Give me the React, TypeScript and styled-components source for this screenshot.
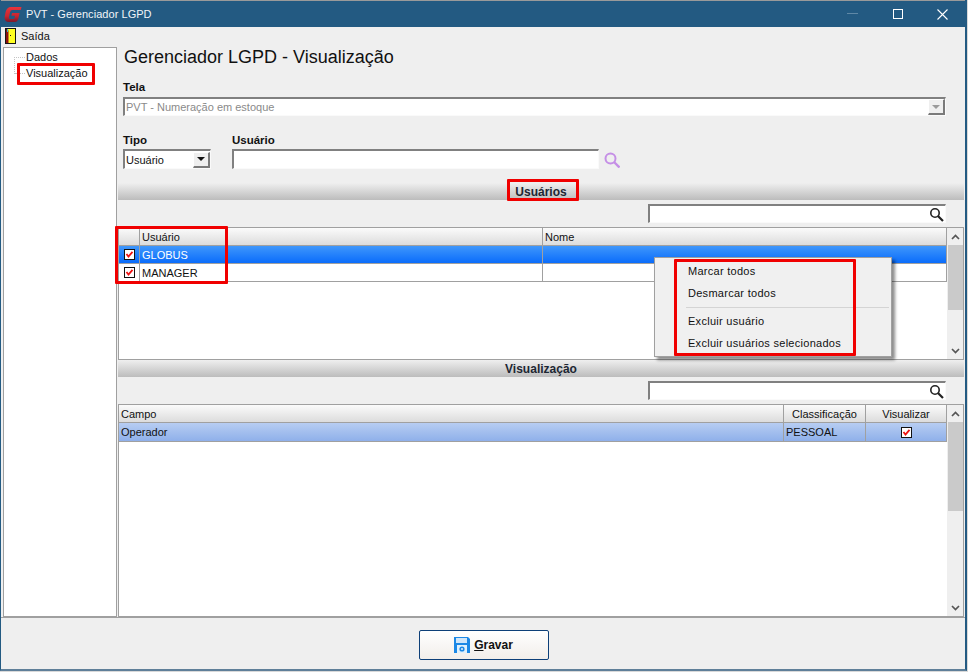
import React from "react";
import styled, { createGlobalStyle } from "styled-components";

const Global = createGlobalStyle`
  html, body { margin: 0; padding: 0; background: #fff; }
  body { font-family: "Liberation Sans", Arial, sans-serif; font-size: 11px; color: #111; }
`;

const Frame = styled.div`
  width: 968px;
  height: 672px;
  background: #d9d9d9;
`;
const Window = styled.div`
  height: 671px;
  width: 967px;
  box-sizing: border-box;
  display: flex;
  flex-direction: column;
  background: #efefef;
  border-left: 1px solid #235a82;
  border-right: 2px solid #235a82;
  border-bottom: 2px solid #5f7f99;
`;
const TitleBar = styled.div`
  height: 27px;
  flex: none;
  box-sizing: border-box;
  border-top: 1px solid #9a9a9a;
  background: #235a82;
  color: #f2f5f8;
  display: flex;
  align-items: center;
  padding-left: 3px;
  gap: 4px;
  font-size: 11px;
  letter-spacing: 0.05px;
`;
const WinButtons = styled.div`
  margin-left: auto;
  display: flex;
  align-items: center;
`;
const WinButton = styled.div`
  width: 45px;
  height: 26px;
  display: flex;
  align-items: center;
  justify-content: center;
`;
const MenuBar = styled.div`
  height: 18px;
  flex: none;
  display: flex;
  align-items: center;
  padding-left: 4px;
  gap: 4px;
  font-size: 11px;
`;
const Body = styled.div`
  flex: 1;
  min-height: 0;
  display: flex;
`;
const Tree = styled.div`
  width: 114px;
  flex: none;
  margin: 2px 0 0 2px;
  box-sizing: border-box;
  border: 1px solid #a0a0a0;
  background: #fff;
  position: relative;
  padding: 1px 0 0 22px;
  font-size: 11px;
`;
const TreeItem = styled.div`
  height: 16px;
  line-height: 16px;
`;
const TreeLines = styled.div`
  position: absolute;
  left: 10px;
  top: 9px;
  width: 10px;
  height: 16px;
  border-left: 1px dotted #c4c4c4;
  border-top: 1px dotted #c4c4c4;
  &::after {
    content: "";
    position: absolute;
    left: 0;
    top: 15px;
    width: 10px;
    border-top: 1px dotted #c4c4c4;
  }
`;
const Marker = styled.div<{ $l: number; $t: number; $w: number; $h: number }>`
  position: absolute;
  left: ${(p) => p.$l}px;
  top: ${(p) => p.$t}px;
  width: ${(p) => p.$w}px;
  height: ${(p) => p.$h}px;
  box-sizing: border-box;
  border: 3px solid #f00000;
  border-radius: 1px;
  pointer-events: none;
`;
const Main = styled.div`
  flex: 1;
  min-width: 0;
  display: flex;
  flex-direction: column;
  padding-right: 1px;
  margin-left: 1px;
`;
const Heading = styled.div`
  height: 24px;
  line-height: 24px;
  padding-left: 6px;
  font-size: 18px;
  color: #111;
`;
const Label = styled.div`
  font-weight: 700;
  font-size: 11.5px;
  line-height: 13px;
  color: #111;
`;
const TopField = styled.div`
  margin-top: 12px;
  padding-left: 5px;
`;
const FilterRow = styled.div`
  margin-top: 17px;
  padding-left: 5px;
  display: flex;
  align-items: flex-start;
`;
const FilterField = styled.div<{ $width?: number }>`
  padding-top: 1px;
  ${(p) => (p.$width ? `width: ${p.$width}px;` : "")}
`;
const Sunken = styled.div<{ $w: number; $h: number; $gap?: number }>`
  width: ${(p) => p.$w}px;
  height: ${(p) => p.$h}px;
  margin-top: ${(p) => p.$gap ?? 3}px;
  box-sizing: border-box;
  background: #fff;
  border-style: solid;
  border-width: 2px 1px 1px 2px;
  border-color: #808080 #fafafa #fafafa #808080;
  display: flex;
  align-items: center;
  justify-content: space-between;
  font-size: 11px;
`;
const DisabledText = styled.span`
  color: #8a8a8a;
  padding-left: 1px;
  font-size: 11px;
`;
const ComboText = styled.span`
  padding-left: 1px;
`;
const DropButton = styled.div<{ $off?: boolean }>`
  width: 17px;
  height: 16px;
  flex: none;
  box-sizing: border-box;
  background: #efefef;
  border-style: solid;
  border-width: 1px 2px 2px 1px;
  border-color: #fff #7a7a7a #7a7a7a #fff;
  display: flex;
  align-items: center;
  justify-content: center;
  &::after {
    content: "";
    border-style: solid;
    border-width: 4px 4px 0 4px;
    border-color: ${(p) => (p.$off ? "#9a9a9a" : "#111")} transparent transparent transparent;
  }
`;
const SearchIcon = styled.svg`
  margin: 19px 0 0 5px;
`;
const Band = styled.div<{ $top: number }>`
  margin-top: ${(p) => p.$top}px;
  height: 17px;
  flex: none;
  position: relative;
  background: linear-gradient(#efefef, #bcbcbc);
  text-align: center;
  font-weight: 700;
  font-size: 12px;
  line-height: 19px;
  color: #1d2733;
`;
const SearchRow = styled.div`
  height: 27px;
  flex: none;
  display: flex;
  justify-content: flex-end;
  padding-right: 18px;
  box-sizing: border-box;
  padding-top: 1px;
`;
const SearchGlass = styled.svg`
  margin-right: 1px;
`;
const Table = styled.div<{ $grow?: boolean }>`
  ${(p) => (p.$grow ? "flex: 1; min-height: 0;" : "height: 133px; flex: none;")}
  position: relative;
  display: flex;
  box-sizing: border-box;
  border: 1px solid #a0a0a0;
  background: #fff;
`;
const Grid = styled.div`
  flex: 1;
  min-width: 0;
`;
const Row = styled.div<{ $cols: string; $h: number; $bg?: string; $color?: string }>`
  display: grid;
  grid-template-columns: ${(p) => p.$cols};
  height: ${(p) => p.$h}px;
  box-sizing: border-box;
  border-bottom: 1px solid #a0a0a0;
  background: ${(p) => p.$bg || "#fff"};
  color: ${(p) => p.$color || "#111"};
  border-right: 1px solid #a0a0a0;
`;
const Cell = styled.div<{ $center?: boolean }>`
  display: flex;
  align-items: center;
  justify-content: ${(p) => (p.$center ? "center" : "flex-start")};
  padding-left: ${(p) => (p.$center ? 0 : 2)}px;
  font-size: 11px;
  white-space: nowrap;
  & + & {
    border-left: 1px solid #a0a0a0;
  }
`;
const Scrollbar = styled.div`
  width: 16px;
  flex: none;
  background: #efefef;
  display: flex;
  flex-direction: column;
  padding-left: 1px;
  box-sizing: border-box;
`;
const ScrollThumb = styled.div<{ $h: number }>`
  height: ${(p) => p.$h}px;
  background: #cacaca;
`;
const ScrollTrack = styled.div`
  flex: 1;
`;
const ScrollArrow = styled.div`
  height: 17px;
  display: flex;
  align-items: center;
  justify-content: center;
`;
const Popup = styled.div`
  position: absolute;
  left: 535px;
  top: 29px;
  width: 238px;
  height: 100px;
  box-sizing: border-box;
  background: #f0f0f0;
  border: 1px solid #a0a0a0;
  box-shadow: 3px 3px 3px rgba(0, 0, 0, 0.45);
  padding: 2px;
  z-index: 3;
`;
const PopupItem = styled.div`
  height: 22px;
  line-height: 22px;
  padding-left: 31px;
  font-size: 11px;
  letter-spacing: 0.28px;
  color: #111;
`;
const PopupSep = styled.div`
  height: 1px;
  margin: 3px 0 2px 29px;
  background: #d4d4d4;
`;
const Footer = styled.div`
  height: 52px;
  flex: none;
  box-sizing: border-box;
  border-top: 1px solid #a0a0a0;
  display: flex;
  justify-content: center;
  padding: 12px 0 0 1px;
`;
const SaveButton = styled.button`
  width: 130px;
  height: 30px;
  box-sizing: border-box;
  border: 1px solid #0d3f78;
  border-radius: 2px;
  background: linear-gradient(#ffffff, #f2eeea);
  display: flex;
  align-items: center;
  justify-content: center;
  gap: 4px;
  font: 700 12px "Liberation Sans", Arial, sans-serif;
  color: #111;
  padding: 0;
`;
const AccessKey = styled.span`
  text-decoration: underline;
`;

const Check = () => (
  <svg width="11" height="11" viewBox="0 0 11 11">
    <rect x="0.5" y="0.5" width="10" height="10" fill="#fff" stroke="#111" />
    <path d="M2.5 5 L4.5 7.5 L8.5 2.8" fill="none" stroke="#ee1111" strokeWidth="1.8" />
  </svg>
);

const Chevron = ({ up }: { up?: boolean }) => (
  <svg width="9" height="6" viewBox="0 0 9 6">
    <path d={up ? "M1 5 L4.5 1.5 L8 5" : "M1 1 L4.5 4.5 L8 1"} fill="none" stroke="#555" strokeWidth="1.7" />
  </svg>
);

const ScrollColumn = ({ thumb }: { thumb: number }) => (
  <Scrollbar>
    <ScrollArrow><Chevron up /></ScrollArrow>
    <ScrollThumb $h={thumb} />
    <ScrollTrack />
    <ScrollArrow><Chevron /></ScrollArrow>
  </Scrollbar>
);

const Glass = () => (
  <SearchGlass width="15" height="15" viewBox="0 0 15 15">
    <circle cx="6" cy="6" r="4.2" fill="#fff" stroke="#222" strokeWidth="1.6" />
    <path d="M9 9 L14 14" stroke="#222" strokeWidth="2.2" />
  </SearchGlass>
);

const TableSearch = () => (
  <SearchRow>
    <Sunken $w={298} $h={19}>
      <span />
      <Glass />
    </Sunken>
  </SearchRow>
);

const userCols = "20px 403px 1fr";
const fieldCols = "664px 82px 1fr";
const headerBg = "linear-gradient(#fbfbfb, #dcdcdc)";

export default function App() {
  return (
    <Frame>
      <Global />
      <Window>
        <TitleBar>
          <svg width="18" height="17" viewBox="0 0 18 17">
            <defs>
              <linearGradient id="logoRed" x1="0" y1="0" x2="0" y2="1">
                <stop offset="0" stopColor="#e8343c" />
                <stop offset="0.6" stopColor="#c9252f" />
                <stop offset="1" stopColor="#7a1a2c" />
              </linearGradient>
            </defs>
            <path
              d="M17.5 1 H7 Q3 1 1.6 6 L0.6 11 Q0.2 16 5 16 H11 Q13.5 16 14.2 13 L15.6 7 H8 L7.4 9.8 H11 L10.6 12 Q10.4 13 9.4 13 H6 Q4.6 13 5 11 L6 6.2 Q6.6 4 8.4 4 H16.8 Z"
              fill="url(#logoRed)"
            />
          </svg>
          <span>PVT - Gerenciador LGPD</span>
          <WinButtons>
            <WinButton>
              <svg width="11" height="2" viewBox="0 0 11 2"><rect width="11" height="1" fill="#5f88a6" /></svg>
            </WinButton>
            <WinButton>
              <svg width="10" height="10" viewBox="0 0 10 10"><rect x="0.5" y="0.5" width="9" height="9" fill="none" stroke="#fff" /></svg>
            </WinButton>
            <WinButton>
              <svg width="11" height="11" viewBox="0 0 11 11"><path d="M0.5 0.5 L10.5 10.5 M10.5 0.5 L0.5 10.5" stroke="#fff" strokeWidth="1.1" /></svg>
            </WinButton>
          </WinButtons>
        </TitleBar>
        <MenuBar>
          <svg width="12" height="16" viewBox="0 0 12 16">
            <rect width="11" height="16" fill="#151515" />
            <rect x="3" y="1" width="7" height="14" fill="#ffff22" />
            <path d="M1 1 L3.5 2.5 V15 H1 Z" fill="#8b1010" />
            <rect x="2" y="1" width="1" height="3" fill="#35b8c8" />
            <rect x="5" y="7" width="1" height="1" fill="#151515" />
          </svg>
          <span>Saída</span>
        </MenuBar>
        <Body>
          <Tree>
            <TreeLines />
            <TreeItem>Dados</TreeItem>
            <TreeItem>Visualização</TreeItem>
            <Marker $l={13} $t={15} $w={78} $h={22} />
          </Tree>
          <Main>
            <Heading>Gerenciador LGPD - Visualização</Heading>
            <TopField>
              <Label>Tela</Label>
              <Sunken $w={823} $h={19}>
                <DisabledText>PVT - Numeração em estoque</DisabledText>
                <DropButton $off />
              </Sunken>
            </TopField>
            <FilterRow>
              <FilterField $width={109}>
                <Label>Tipo</Label>
                <Sunken $w={88} $h={20} $gap={2}>
                  <ComboText>Usuário</ComboText>
                  <DropButton />
                </Sunken>
              </FilterField>
              <FilterField>
                <Label>Usuário</Label>
                <Sunken $w={367} $h={20} $gap={2} />
              </FilterField>
              <SearchIcon width="16" height="16" viewBox="0 0 16 16">
                <circle cx="6.5" cy="6.5" r="5" fill="none" stroke="#c58fe6" strokeWidth="2" />
                <path d="M10 10 L15.5 15.5" stroke="#c58fe6" strokeWidth="2.4" />
              </SearchIcon>
            </FilterRow>
            <Band $top={14}>
              Usuários
              <Marker $l={389} $t={-4} $w={72} $h={22} />
            </Band>
            <TableSearch />
            <Table>
              <Grid>
                <Row $cols={userCols} $h={18} $bg={headerBg}>
                  <Cell />
                  <Cell>Usuário</Cell>
                  <Cell>Nome</Cell>
                </Row>
                <Row $cols={userCols} $h={18} $bg="linear-gradient(#3f97fb, #0a6cfb)" $color="#fff">
                  <Cell $center><Check /></Cell>
                  <Cell>GLOBUS</Cell>
                  <Cell />
                </Row>
                <Row $cols={userCols} $h={18}>
                  <Cell $center><Check /></Cell>
                  <Cell>MANAGER</Cell>
                  <Cell />
                </Row>
              </Grid>
              <ScrollColumn thumb={65} />
              <Marker $l={-4} $t={-2} $w={113} $h={58} />
              <Popup>
                <PopupItem>Marcar todos</PopupItem>
                <PopupItem>Desmarcar todos</PopupItem>
                <PopupSep />
                <PopupItem>Excluir usuário</PopupItem>
                <PopupItem>Excluir usuários selecionados</PopupItem>
                <Marker $l={19} $t={1} $w={182} $h={97} />
              </Popup>
            </Table>
            <Band $top={0}>Visualização</Band>
            <TableSearch />
            <Table $grow>
              <Grid>
                <Row $cols={fieldCols} $h={18} $bg={headerBg}>
                  <Cell>Campo</Cell>
                  <Cell $center>Classificação</Cell>
                  <Cell $center>Visualizar</Cell>
                </Row>
                <Row $cols={fieldCols} $h={19} $bg="linear-gradient(#b7cdf2, #8fb0ea)">
                  <Cell>Operador</Cell>
                  <Cell>PESSOAL</Cell>
                  <Cell $center><Check /></Cell>
                </Row>
              </Grid>
              <ScrollColumn thumb={89} />
            </Table>
          </Main>
        </Body>
        <Footer>
          <SaveButton>
            <svg width="16" height="16" viewBox="0 0 16 16">
              <path d="M0 0 H14 L16 2 V16 H0 Z" fill="#1b88e6" />
              <rect x="2" y="1" width="11" height="5" fill="#cfe6fa" />
              <rect x="3" y="8" width="10" height="8" fill="#dff0fc" />
              <circle cx="8" cy="12" r="2.6" fill="#1b88e6" />
              <circle cx="8" cy="12" r="1" fill="#dff0fc" />
            </svg>
            <span><AccessKey>G</AccessKey>ravar</span>
          </SaveButton>
        </Footer>
      </Window>
    </Frame>
  );
}
